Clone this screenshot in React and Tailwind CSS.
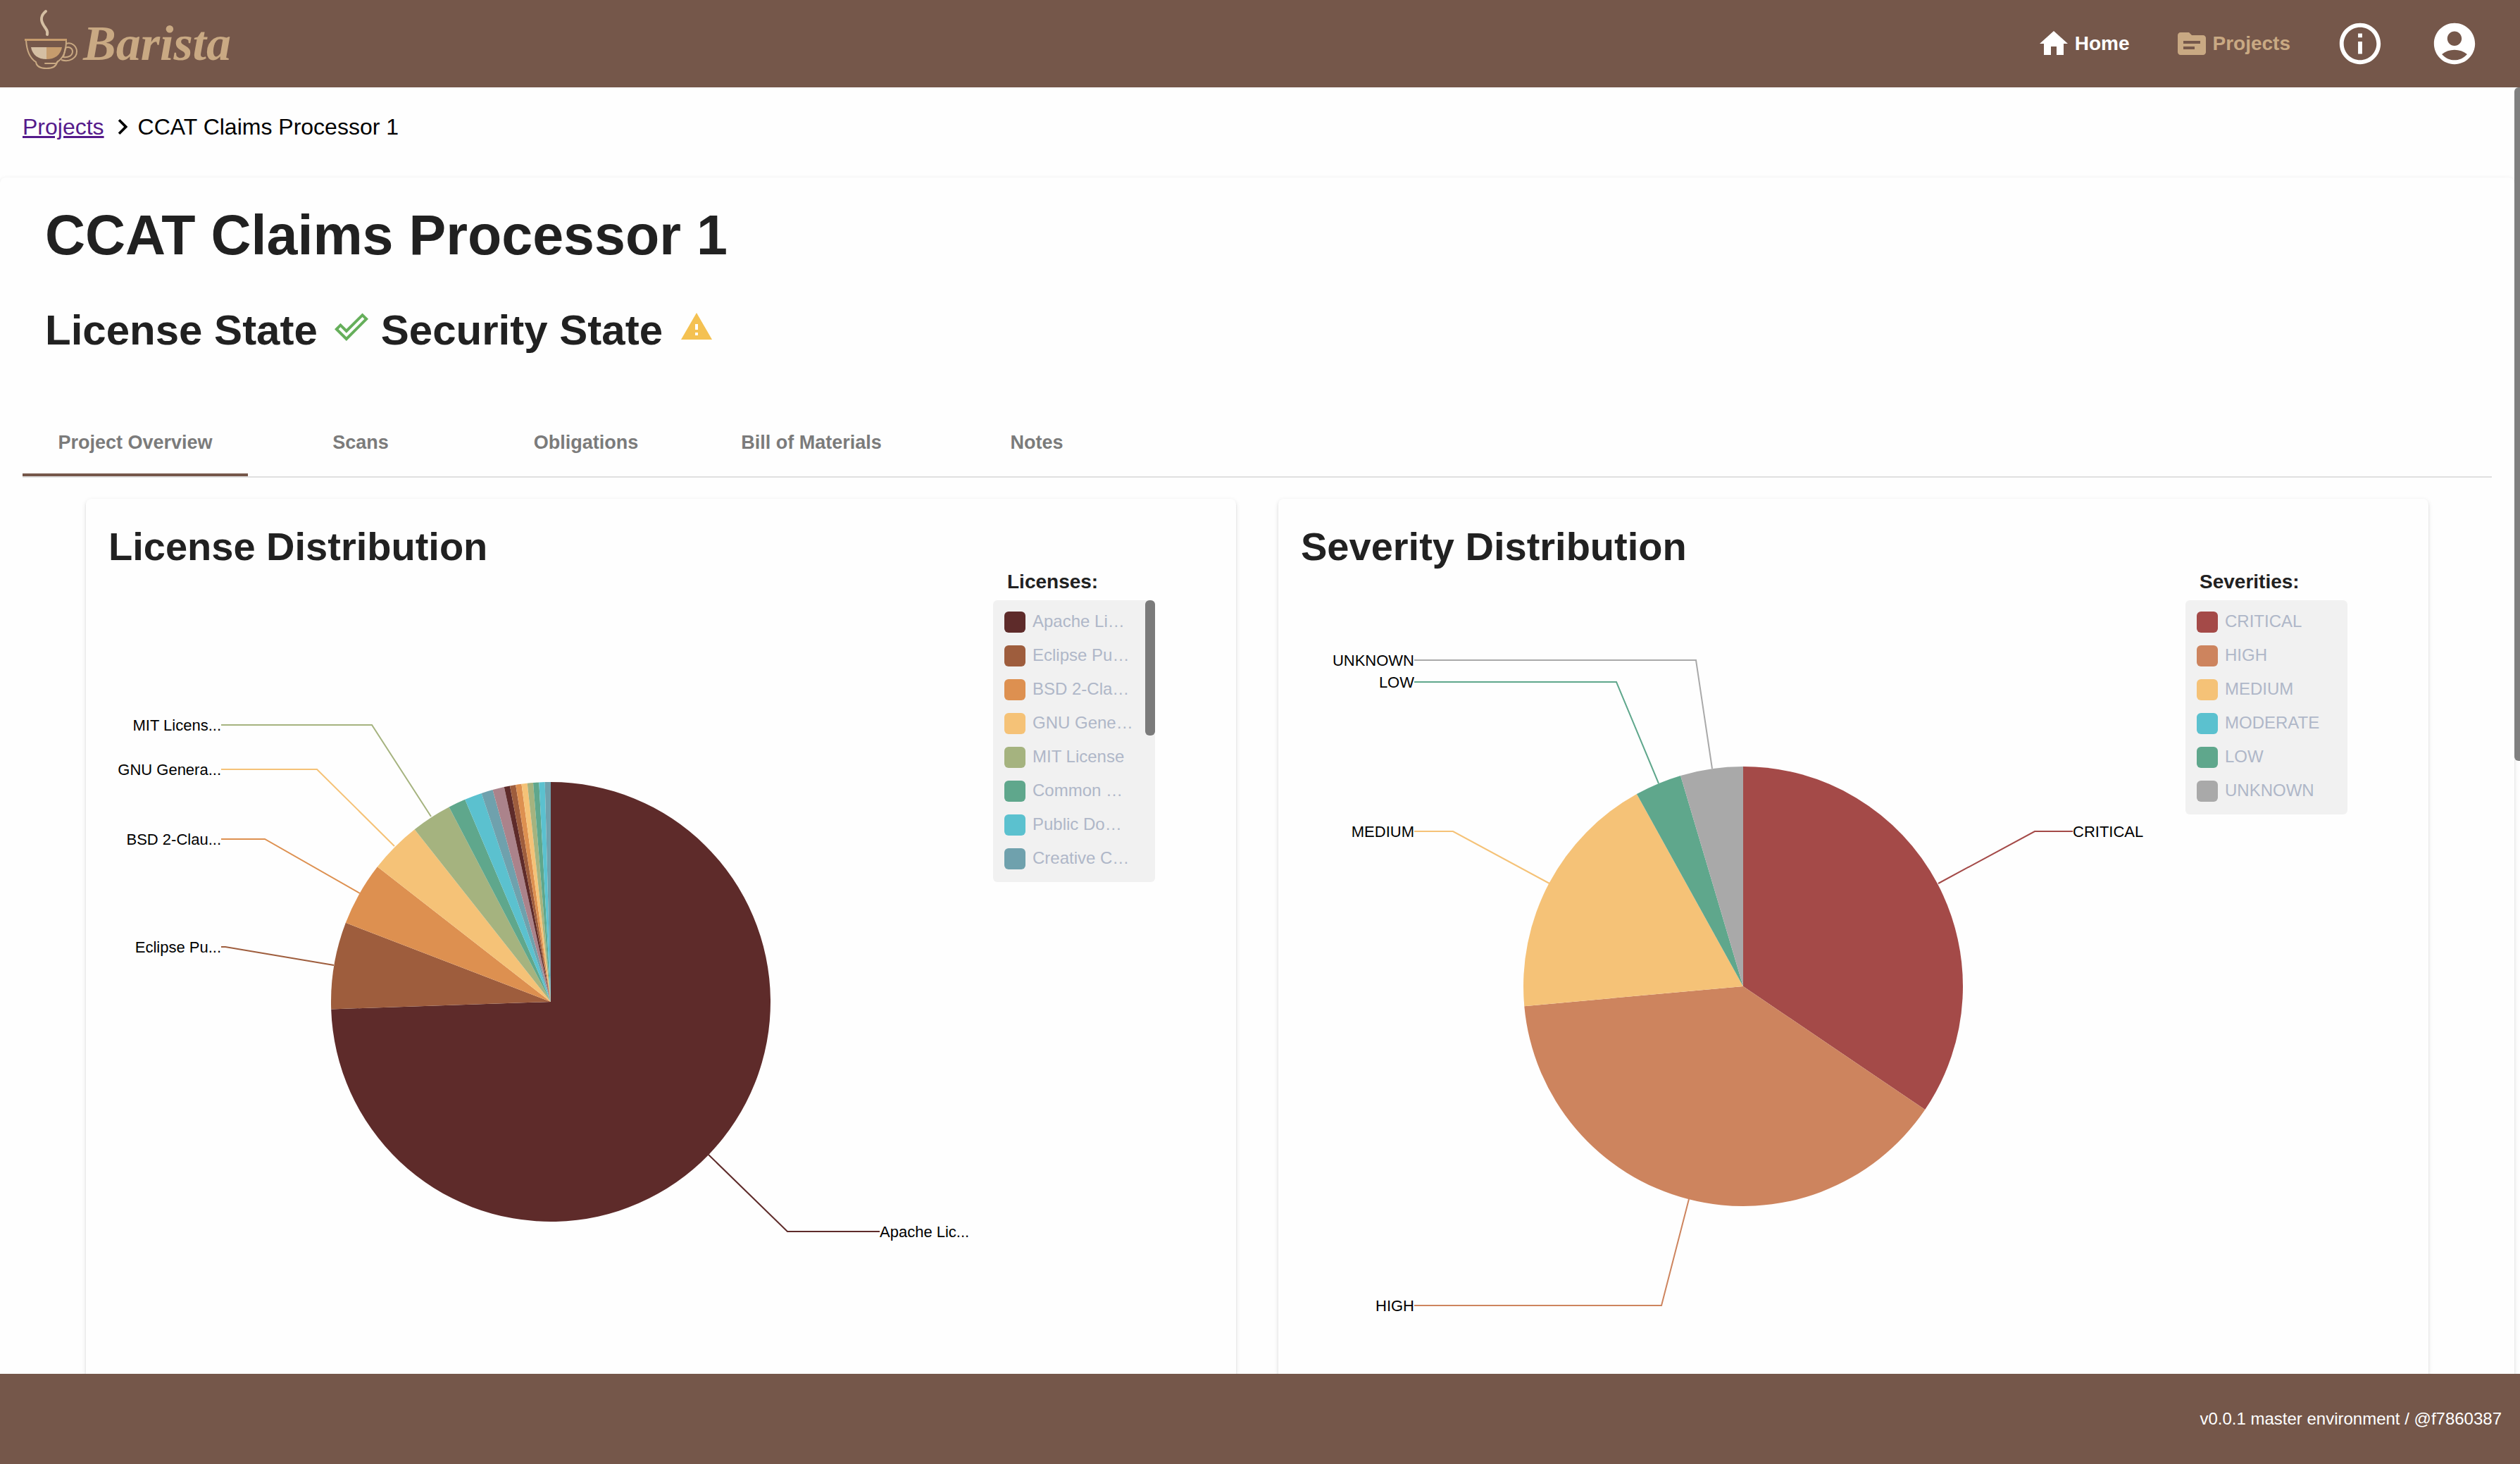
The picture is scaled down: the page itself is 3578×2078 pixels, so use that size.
import React from "react";
import {
  MdHome,
  MdInfoOutline,
  MdAccountCircle,
  MdChevronRight,
  MdDoneOutline,
  MdWarning,
} from "react-icons/md";

const CARD_SHADOW =
  "shadow-[0_4px_2px_-2px_rgba(0,0,0,0.10),0_2px_2px_rgba(0,0,0,0.10),0_2px_6px_rgba(0,0,0,0.12)]";

const PALETTE = [
  "#5e2b2a",
  "#9e5d3d",
  "#dd9050",
  "#f5c277",
  "#a5b37f",
  "#5fa78c",
  "#5bc1cf",
  "#6fa1ad",
  "#ab838b",
];

const licenseSlices = [175, 15, 11, 9, 7, 3, 3, 2, 2, 1, 1, 1, 1, 1, 1, 1, 1].map(
  (value, i) => ({ value, color: PALETTE[i % PALETTE.length] })
);

const licenseCallouts = [
  { text: "MIT Licens...", color: "#a5b37f", points: "160,217 374,217 458,347", x: 160, y: 225, anchor: "end" },
  { text: "GNU Genera...", color: "#f5c277", points: "160,280 296,280 406,389", x: 160, y: 288, anchor: "end" },
  { text: "BSD 2-Clau...", color: "#dd9050", points: "160,379 222,379 357,456", x: 160, y: 387, anchor: "end" },
  { text: "Eclipse Pu...", color: "#9e5d3d", points: "160,532 166,532 320,558", x: 160, y: 540, anchor: "end" },
  { text: "Apache Lic...", color: "#5e2b2a", points: "852,827 964,936 1095,936", x: 1095, y: 944, anchor: "start" },
];

const licenseLegend = [
  "Apache Li…",
  "Eclipse Pu…",
  "BSD 2-Cla…",
  "GNU Gene…",
  "MIT License",
  "Common …",
  "Public Do…",
  "Creative C…",
].map((label, i) => ({ label, color: PALETTE[i] }));

const severitySlices = [
  { value: 30, color: "#a44a48" },
  { value: 34, color: "#cd845e" },
  { value: 16, color: "#f5c277" },
  { value: 3, color: "#5fa78c" },
  { value: 4, color: "#a9a9a9" },
];

const severityCallouts = [
  { text: "UNKNOWN", color: "#a9a9a9", points: "161,125 561,125 584,279", x: 161, y: 133, anchor: "end" },
  { text: "LOW", color: "#5fa78c", points: "161,156 448,156 508,300", x: 161, y: 164, anchor: "end" },
  { text: "MEDIUM", color: "#f5c277", points: "161,368 216,368 353,442", x: 161, y: 376, anchor: "end" },
  { text: "HIGH", color: "#cd845e", points: "161,1041 512,1041 551,890", x: 161, y: 1049, anchor: "end" },
  { text: "CRITICAL", color: "#a44a48", points: "905,442 1042,368 1096,368", x: 1096, y: 376, anchor: "start" },
];

const severityLegend = [
  { label: "CRITICAL", color: "#a44a48" },
  { label: "HIGH", color: "#cd845e" },
  { label: "MEDIUM", color: "#f5c277" },
  { label: "MODERATE", color: "#5bc1cf" },
  { label: "LOW", color: "#5fa78c" },
  { label: "UNKNOWN", color: "#a9a9a9" },
];

function arcs(slices, cx, cy, r) {
  const total = slices.reduce((sum, s) => sum + s.value, 0);
  let start = 0;
  return slices.map((s) => {
    const end = start + s.value;
    const a0 = (start / total) * 2 * Math.PI;
    const a1 = (end / total) * 2 * Math.PI;
    start = end;
    const large = a1 - a0 > Math.PI ? 1 : 0;
    const x0 = cx + r * Math.sin(a0);
    const y0 = cy - r * Math.cos(a0);
    const x1 = cx + r * Math.sin(a1);
    const y1 = cy - r * Math.cos(a1);
    return { d: `M${cx} ${cy}L${x0} ${y0}A${r} ${r} 0 ${large} 1 ${x1} ${y1}Z`, color: s.color };
  });
}

function PieChart({ label, slices, callouts, cy }) {
  return (
    <svg viewBox="0 0 1256 1180" className="h-auto min-w-0 flex-1" role="img" aria-label={label}>
      {arcs(slices, 628, cy, 312).map((arc, i) => (
        <path key={i} d={arc.d} fill={arc.color} />
      ))}
      {callouts.map((c) => (
        <g key={c.text}>
          <polyline points={c.points} fill="none" stroke={c.color} strokeWidth="2" />
          <text x={c.x} y={c.y} textAnchor={c.anchor} fontSize="22" fill="#000">
            {c.text}
          </text>
        </g>
      ))}
    </svg>
  );
}

function Legend({ title, items, scrollable }) {
  return (
    <section className="mr-[83px] w-[230px] shrink-0">
      <h3 className="pl-5 text-[28px] leading-7 font-bold">{title}</h3>
      <div className="mt-3 flex items-start rounded-md bg-[#f1f1f1]">
        <ul className="min-w-0 flex-1 pt-4 pl-4">
          {items.map((item) => (
            <li key={item.label} className="flex h-12 items-start gap-[10px]">
              <span
                className="size-[30px] shrink-0 rounded-md"
                style={{ backgroundColor: item.color }}
              />
              <span className="text-[24px] leading-7 whitespace-nowrap text-[#afb7c8]">
                {item.label}
              </span>
            </li>
          ))}
        </ul>
        {scrollable && <div className="h-48 w-[14px] shrink-0 rounded-md bg-[#7b7b7b]" />}
      </div>
    </section>
  );
}

function ChartCard({ title, children }) {
  return (
    <article className={`min-w-0 flex-1 rounded-lg px-8 pt-8 pb-8 ${CARD_SHADOW}`}>
      <h2 className="text-[56px] leading-[72px] font-bold">{title}</h2>
      <div className="flex items-start">{children}</div>
    </article>
  );
}

function CupLogo() {
  return (
    <svg viewBox="0 0 80 100" className="h-[100px] w-20" fill="none" aria-hidden="true">
      <path d="M31 4C24 10 23 16 28 24C32 30 34 32 33 37" stroke="#d5bfa3" strokeWidth="4" strokeLinecap="round" />
      <path d="M3 45C4 62 9 71 17 76C18 83 25 85 32 85C41 85 46 82 47 76C55 71 60 63 60 45" stroke="#c9a983" strokeWidth="2" />
      <path d="M1 44.5H61" stroke="#c69c6d" strokeWidth="3" />
      <path d="M30 78H44C47 78 48 76 48 75" stroke="#c9a983" strokeWidth="2" strokeLinecap="round" />
      <path d="M10 55H32V72C20 72 12 66 10 55Z" fill="#d5bfa3" />
      <path d="M32 55H54C52 66 44 72 32 72Z" fill="#c69c6d" />
      <path d="M60 50C68 47 75 54 75 61C75 70 65 77 53 73" stroke="#c9a983" strokeWidth="2" />
      <path d="M59 56C64 53 69 57 69 61C69 67 63 70 56 69Z" stroke="#c9a983" strokeWidth="2" />
    </svg>
  );
}

function SourceFolderIcon() {
  return (
    <svg viewBox="0 0 24 24" className="size-12" fill="currentColor" aria-hidden="true">
      <path d="M20 6h-8l-2-2H4c-1.1 0-1.99.9-1.99 2L2 18c0 1.1.9 2 2 2h16c1.1 0 2-.9 2-2V8c0-1.1-.9-2-2-2zm-6 10H6v-2h8v2zm4-4H6v-2h12v2z" />
    </svg>
  );
}

const tabs = ["Project Overview", "Scans", "Obligations", "Bill of Materials", "Notes"];

export default function App() {
  return (
    <div className="flex h-screen flex-col overflow-hidden bg-[#fefefe] font-['Liberation_Sans',Arial,sans-serif] text-[#212121]">
      <header className="flex h-[124px] shrink-0 items-center justify-between bg-[#75574a] pr-[58px] pl-[34px] text-white">
        <a href="#home" className="flex items-center gap-1 text-[#c9a983]">
          <CupLogo />
          <span className="font-['Liberation_Serif',serif] text-[70px] leading-[80px] font-bold italic">
            Barista
          </span>
        </a>
        <nav className="flex items-center gap-16 text-[28px] leading-8 font-bold">
          <a href="#home" className="flex items-center gap-[6px]">
            <MdHome className="size-12" />
            Home
          </a>
          <a href="#projects" className="flex items-center gap-[6px] text-[#c9a983]">
            <SourceFolderIcon />
            Projects
          </a>
          <button type="button" aria-label="About">
            <MdInfoOutline className="size-[70px]" />
          </button>
          <button type="button" aria-label="Account">
            <MdAccountCircle className="size-[70px]" />
          </button>
        </nav>
      </header>

      <div className="flex min-h-0 flex-1 overflow-hidden">
        <main className="min-w-0 flex-1">
          <nav
            aria-label="Breadcrumb"
            className="flex items-center px-8 pt-[34px] pb-[50px] text-[32px] leading-[44px] text-black"
          >
            <a href="#projects" className="text-[#551a8b] underline">
              Projects
            </a>
            <MdChevronRight className="ml-1 size-11" />
            <span>CCAT Claims Processor 1</span>
          </nav>

          <div className={`rounded-lg px-8 pt-9 ${CARD_SHADOW}`}>
            <h1 className="px-8 text-[79px] leading-[92px] font-bold">CCAT Claims Processor 1</h1>
            <div className="mt-12 flex items-start gap-[18px] px-8">
              <h2 className="flex items-start gap-6 text-[60px] leading-[82px] font-bold">
                License State
                <MdDoneOutline className="mt-3 size-12 text-[#66af5b]" />
              </h2>
              <h2 className="flex items-start gap-6 text-[60px] leading-[82px] font-bold">
                Security State
                <MdWarning className="mt-3 size-12 text-[#f4c152]" />
              </h2>
            </div>

            <div role="tablist" className="mt-[70px] flex border-b-2 border-[#e0e0e0]">
              {tabs.map((tab, i) => (
                <button
                  key={tab}
                  type="button"
                  role="tab"
                  aria-selected={i === 0}
                  className={`h-24 w-80 border-b-4 pt-1 text-[27px] leading-8 font-bold text-[#7b7b7b] ${
                    i === 0 ? "border-[#75574a]" : "border-transparent"
                  }`}
                >
                  {tab}
                </button>
              ))}
            </div>

            <div className="flex gap-[60px] px-[90px] pt-[30px]">
              <ChartCard title="License Distribution">
                <PieChart
                  label="License distribution"
                  slices={licenseSlices}
                  callouts={licenseCallouts}
                  cy={610}
                />
                <Legend title="Licenses:" items={licenseLegend} scrollable />
              </ChartCard>
              <ChartCard title="Severity Distribution">
                <PieChart
                  label="Severity distribution"
                  slices={severitySlices}
                  callouts={severityCallouts}
                  cy={588}
                />
                <Legend title="Severities:" items={severityLegend} />
              </ChartCard>
            </div>
          </div>
        </main>
        <div className="w-2 shrink-0">
          <div className="h-[956px] rounded-l-md bg-[#808080]" />
        </div>
      </div>

      <footer className="flex h-32 shrink-0 items-center justify-end bg-[#75574a] px-[26px] text-[24px] leading-8 text-white">
        v0.0.1 master environment / @f7860387
      </footer>
    </div>
  );
}
